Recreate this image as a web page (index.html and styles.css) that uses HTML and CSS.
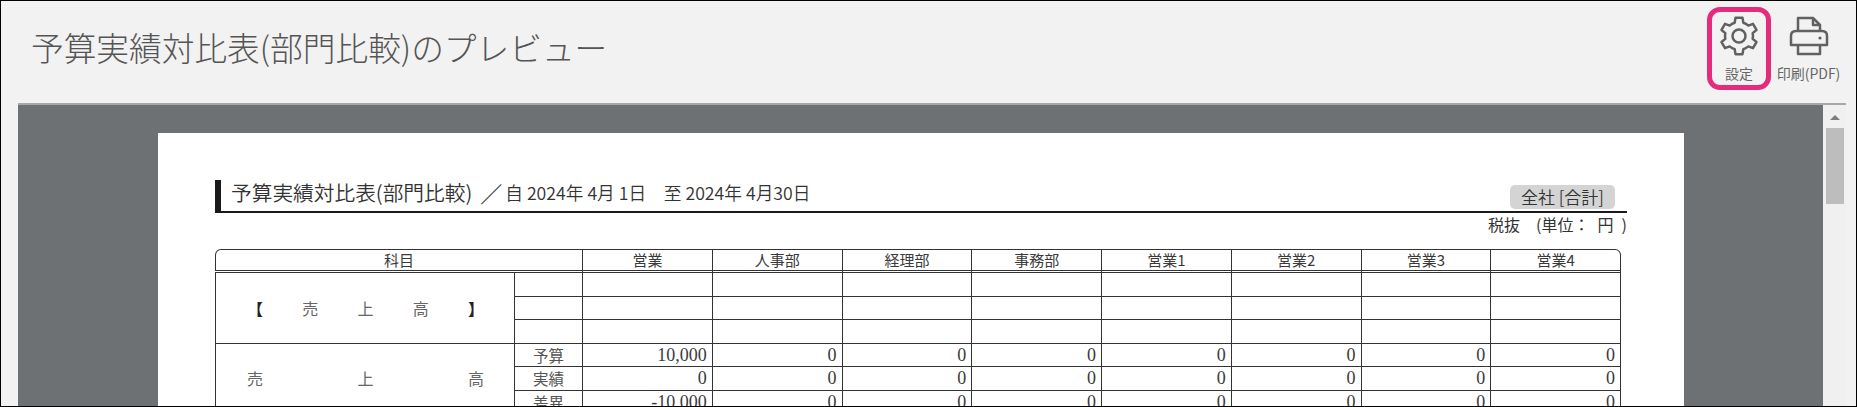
FILE: index.html
```html
<!DOCTYPE html>
<html lang="ja">
<head>
    <meta charset="UTF-8">
    <meta name="viewport" content="width=device-width, initial-scale=1.0">
    <title>予算実績対比表(部門比較)のプレビュー</title>
    <link rel="stylesheet" href="styles.css">
</head>
<body>

    <div class="app">
        <header class="topbar">
            <h1 class="page-title">予算実績対比表(部門比較)のプレビュー</h1>
            <div class="tools">
                <button class="tool-btn tool-btn-active" type="button">
                    <svg class="tool-icon" viewBox="0 0 40 40" aria-hidden="true">
                        <path d="M15.67 6.69 L16.47 1.84 H23.53 L24.33 6.69 A14 14 0 0 1 29.36 9.6 L33.96 7.86 L37.49 13.98 L33.69 17.1 A14 14 0 0 1 33.69 22.9 L37.49 26.02 L33.96 32.14 L29.36 30.4 A14 14 0 0 1 24.33 33.31 L23.53 38.16 H16.47 L15.67 33.31 A14 14 0 0 1 10.64 30.4 L6.04 32.14 L2.51 26.02 L6.31 22.9 A14 14 0 0 1 6.31 17.1 L2.51 13.98 L6.04 7.86 L10.64 9.6 A14 14 0 0 1 15.67 6.69 Z"/>
                        <circle cx="20" cy="20" r="6.5"/>
                    </svg>
                    <span class="tool-label">設定</span>
                </button>
                <button class="tool-btn" type="button">
                    <svg class="tool-icon" viewBox="0 1 40 40" aria-hidden="true">
                        <path d="M9 16 V3 H24 L31 10 V16"/>
                        <path d="M24 3 V10 H31"/>
                        <path d="M9 30 H2 V21 Q2 16 7 16 H33 Q38 16 38 21 V30 Z"/>
                        <path d="M9 30 V39 H31 V30"/>
                        <circle class="icon-dot" cx="31" cy="23" r="1.6"/>
                    </svg>
                    <span class="tool-label">印刷(PDF)</span>
                </button>
            </div>
        </header>

        <div class="viewer">
            <div class="canvas">
                <div class="sheet">
                    <div class="report-head">
                        <span class="report-title">予算実績対比表(部門比較)</span>
                        <span class="report-slash">／</span>
                        <span class="report-period">自 2024年 4月 1日　至 2024年 4月30日</span>
                        <span class="report-tag">全社 [合計]</span>
                    </div>
                    <div class="report-unit">税抜　(単位： 円 )</div>

                    <table class="report-table">
                        <colgroup>
                            <col class="col-name">
                            <col class="col-kind">
                            <col class="col-dept">
                            <col class="col-dept">
                            <col class="col-dept">
                            <col class="col-dept">
                            <col class="col-dept">
                            <col class="col-dept">
                            <col class="col-dept">
                            <col class="col-dept">
                        </colgroup>
                        <thead>
                            <tr>
                                <th colspan="2">科目</th>
                                <th>営業</th>
                                <th>人事部</th>
                                <th>経理部</th>
                                <th>事務部</th>
                                <th>営業1</th>
                                <th>営業2</th>
                                <th>営業3</th>
                                <th>営業4</th>
                            </tr>
                        </thead>
                        <tbody>
                            <tr>
                                <td class="name-cell" rowspan="3">
                                    <div class="spread"><b>【</b><span>売</span><span>上</span><span>高</span><b>】</b></div>
                                </td>
                                <td></td><td></td><td></td><td></td><td></td><td></td><td></td><td></td><td></td>
                            </tr>
                            <tr><td></td><td></td><td></td><td></td><td></td><td></td><td></td><td></td><td></td></tr>
                            <tr><td></td><td></td><td></td><td></td><td></td><td></td><td></td><td></td><td></td></tr>
                            <tr>
                                <td class="name-cell" rowspan="3">
                                    <div class="spread spread-top"><span>売</span><span>上</span><span>高</span></div>
                                </td>
                                <td class="kind">予算</td>
                                <td class="num">10,000</td><td class="num">0</td><td class="num">0</td><td class="num">0</td><td class="num">0</td><td class="num">0</td><td class="num">0</td><td class="num">0</td>
                            </tr>
                            <tr>
                                <td class="kind">実績</td>
                                <td class="num">0</td><td class="num">0</td><td class="num">0</td><td class="num">0</td><td class="num">0</td><td class="num">0</td><td class="num">0</td><td class="num">0</td>
                            </tr>
                            <tr>
                                <td class="kind">差異</td>
                                <td class="num">-10,000</td><td class="num">0</td><td class="num">0</td><td class="num">0</td><td class="num">0</td><td class="num">0</td><td class="num">0</td><td class="num">0</td>
                            </tr>
                        </tbody>
                    </table>
                </div>
            </div>
            <div class="scrollbar">
                <span class="scroll-arrow"></span>
                <span class="scroll-thumb"></span>
            </div>
        </div>
    </div>

</body>
</html>
```

FILE: styles.css
```css
/* Window frame */
html, body {
    margin: 0;
    height: 100%;
    overflow: hidden;
}

.app {
    display: flex;
    flex-direction: column;
    width: 1857px;
    height: 407px;
    box-sizing: border-box;
    border: 1px solid #000;
    background-color: #f2f2f2;
    font-family: "Noto Sans CJK JP", "Liberation Sans", sans-serif;
    overflow: hidden;
}

/* Title bar with tool buttons */
.topbar {
    display: flex;
    justify-content: space-between;
    flex: 0 0 102px;
    padding: 6px 12px 0 30px;
    box-sizing: border-box;
}

.page-title {
    margin: 20px 0 0;
    font-size: 32.7px;
    line-height: 40px;
    font-weight: 300;
    color: #555;
}

.tools {
    display: flex;
    align-items: flex-start;
    gap: 2px;
}

.tool-btn {
    display: flex;
    flex-direction: column;
    align-items: center;
    width: 64px;
    height: 83px;
    padding: 4px 0 0;
    box-sizing: border-box;
    border: 5px solid transparent;
    border-radius: 13px;
    background: none;
    font-family: inherit;
}

.tool-btn + .tool-btn {
    width: 71px;
}

/* Highlight around the settings button */
.tool-btn-active {
    border-color: #e52b7b;
}

.tool-icon {
    flex: none;
    width: 40px;
    height: 40px;
    fill: none;
    stroke: #5f6163;
    stroke-width: 2.5;
    stroke-linejoin: round;
}

.icon-dot {
    fill: #5f6163;
    stroke: none;
}

.tool-label {
    margin-top: 8px;
    font-size: 14px;
    line-height: 18px;
    color: #666;
    white-space: nowrap;
}

/* Preview area */
.viewer {
    display: flex;
    flex: 1;
    min-height: 0;
    margin: 0 10px 0 17px;
    border-top: 2px solid #a8a8a8;
}

.canvas {
    flex: 1;
    padding: 28px 0 0 140px;
    background-color: #6e7173;
    overflow: hidden;
}

.sheet {
    width: 1526px;
    height: 400px;
    padding: 47px 0 0 57px;
    box-sizing: border-box;
    background-color: #fff;
    color: #333;
}

/* Report heading */
.report-head {
    display: flex;
    align-items: center;
    width: 1412px;
    height: 33px;
    padding: 0 0 8px 10px;
    box-sizing: border-box;
    border-left: 6px solid #1a1a1a;
    border-bottom: 2px solid #1a1a1a;
}

.report-title {
    font-size: 20.7px;
    font-weight: 350;
}

.report-slash {
    margin-left: 8px;
    font-size: 22px;
}

.report-period {
    margin-left: 3px;
    font-size: 17.7px;
    font-weight: 350;
}

.report-tag {
    align-self: flex-end;
    margin-left: auto;
    margin-right: 12px;
    margin-bottom: -6px;
    padding: 0 11px;
    height: 24px;
    line-height: 24px;
    border-radius: 5px;
    background-color: #d4d4d4;
    font-size: 17px;
    font-weight: 350;
}

.report-unit {
    width: 1412px;
    height: 36px;
    line-height: 23px;
    text-align: right;
    font-size: 16px;
    word-spacing: 4.5px;
}

/* Report table */
.report-table {
    width: 1406px;
    table-layout: fixed;
    border-collapse: separate;
    border-spacing: 0;
    color: #3a3a3a;
}

.col-name {
    width: 300px;
}

.col-kind {
    width: 68px;
}

.col-dept {
    width: 129.75px;
}

.report-table th {
    height: 24px;
    padding: 0;
    box-sizing: border-box;
    border-top: 1px solid #333;
    border-right: 1px solid #333;
    border-bottom: 3px double #333;
    font-size: 15px;
    line-height: 18px;
    font-weight: 400;
}

.report-table th:first-child {
    border-left: 1px solid #333;
    border-top-left-radius: 6px;
}

.report-table th:last-child {
    border-top-right-radius: 6px;
}

.report-table td {
    height: 23.5px;
    padding: 0 5px 0 0;
    box-sizing: border-box;
    border-right: 1px solid #333;
    border-bottom: 1px solid #333;
}

.report-table td.name-cell {
    padding: 0 30px 0 31px;
    border-left: 1px solid #333;
}

.spread {
    display: flex;
    justify-content: space-between;
    color: #666;
    font-size: 16px;
    line-height: 20px;
}

.spread b {
    color: #222;
}

.report-table td.kind {
    padding: 0;
    text-align: center;
    color: #555;
    font-size: 15.5px;
    line-height: 18px;
}

.num {
    text-align: right;
    font-family: "Liberation Serif", serif;
    font-size: 18px;
    line-height: 18px;
}

/* Scrollbar */
.scrollbar {
    display: flex;
    flex-direction: column;
    align-items: center;
    flex: 0 0 23px;
    background-color: #f0f0f0;
}

.scroll-arrow {
    margin-top: 10px;
    border-left: 5px solid transparent;
    border-right: 5px solid transparent;
    border-bottom: 5px solid #7d7d7d;
}

.scroll-thumb {
    width: 18px;
    height: 76px;
    margin-top: 8px;
    background-color: #bdbdbd;
}
```
